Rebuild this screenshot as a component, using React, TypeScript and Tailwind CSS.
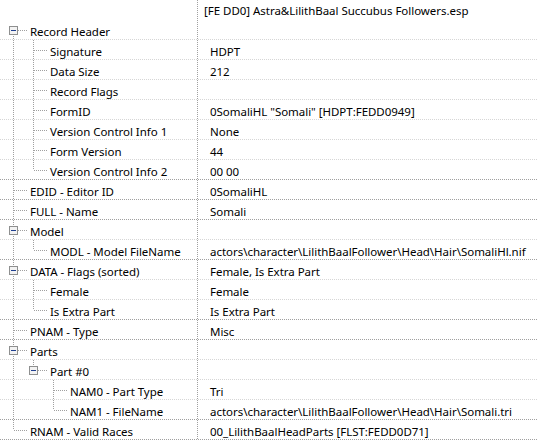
type Row = { label: string; value: string; level: number; open?: boolean };

const rows: Row[] = [
  { label: "Record Header", value: "", level: 0, open: true },
  { label: "Signature", value: "HDPT", level: 1 },
  { label: "Data Size", value: "212", level: 1 },
  { label: "Record Flags", value: "", level: 1 },
  { label: "FormID", value: '0SomaliHL "Somali" [HDPT:FEDD0949]', level: 1 },
  { label: "Version Control Info 1", value: "None", level: 1 },
  { label: "Form Version", value: "44", level: 1 },
  { label: "Version Control Info 2", value: "00 00", level: 1 },
  { label: "EDID - Editor ID", value: "0SomaliHL", level: 0 },
  { label: "FULL - Name", value: "Somali", level: 0 },
  { label: "Model", value: "", level: 0, open: true },
  { label: "MODL - Model FileName", value: "actors\\character\\LilithBaalFollower\\Head\\Hair\\SomaliHl.nif", level: 1 },
  { label: "DATA - Flags (sorted)", value: "Female, Is Extra Part", level: 0, open: true },
  { label: "Female", value: "Female", level: 1 },
  { label: "Is Extra Part", value: "Is Extra Part", level: 1 },
  { label: "PNAM - Type", value: "Misc", level: 0 },
  { label: "Parts", value: "", level: 0, open: true },
  { label: "Part #0", value: "", level: 1, open: true },
  { label: "NAM0 - Part Type", value: "Tri", level: 2 },
  { label: "NAM1 - FileName", value: "actors\\character\\LilithBaalFollower\\Head\\Hair\\Somali.tri", level: 2 },
  { label: "RNAM - Valid Races", value: "00_LilithBaalHeadParts [FLST:FEDD0D71]", level: 0 },
];

// does a later row sit at `level` before the branch closes?
function continues(i: number, level: number) {
  for (let j = i + 1; j < rows.length; j++) {
    if (rows[j].level < level) return false;
    if (rows[j].level === level) return true;
  }
  return false;
}

// 1px on / 1px off dotted guides
const vDots =
  "absolute w-px bg-[repeating-linear-gradient(to_bottom,#a0a0a0_0_1px,transparent_1px_2px)]";
const hDots =
  "absolute h-px bg-[repeating-linear-gradient(to_right,#a0a0a0_0_1px,transparent_1px_2px)]";
const sepStrong =
  "h-px bg-[repeating-linear-gradient(to_right,#a0a0a0_0_1px,transparent_1px_2px)]";
const sepLight =
  "h-px bg-[repeating-linear-gradient(to_right,#d6d6d6_0_1px,transparent_1px_2px)]";
const colSep =
  "w-px shrink-0 bg-[repeating-linear-gradient(to_bottom,#a0a0a0_0_1px,transparent_1px_2px)]";

function TreeRow({ row, i }: { row: Row; i: number }) {
  const next = rows[i + 1];
  const strong = !next || next.level === 0;
  const guides = Array.from({ length: row.level }, (_, k) => continues(i, k));
  return (
    <div className="flex flex-col">
      <div className="flex h-[19px]">
        <div className="flex w-[197px] shrink-0 pl-[3px]">
          {guides.map((g, k) => (
            <div key={k} className="relative w-5 shrink-0">
              {g && <span className={`${vDots} left-[10px] top-0 -bottom-px`} />}
            </div>
          ))}
          <div className="relative w-[25px] shrink-0">
            {i > 0 && <span className={`${vDots} left-[10px] top-0 h-[10px]`} />}
            {continues(i, row.level) && (
              <span className={`${vDots} left-[10px] top-[10px] -bottom-px`} />
            )}
            <span className={`${hDots} left-[11px] top-[10px] w-[14px]`} />
            {row.open && (
              <span className="absolute left-[6px] top-[6px] w-[9px] h-[9px] border border-[#8e8f8f] bg-[#f3f3f3] flex items-center justify-center">
                <span className="w-[5px] h-px bg-[#1f3f8f]" />
              </span>
            )}
          </div>
          <span className="ml-[2px] leading-[23px] whitespace-nowrap">{row.label}</span>
        </div>
        <div className={colSep} />
        <div className="pl-3 leading-[23px] whitespace-nowrap">{row.value}</div>
      </div>
      <div className={strong ? sepStrong : sepLight} />
    </div>
  );
}

export default function App() {
  return (
    <div className="w-[537px] h-[442px] overflow-hidden bg-white text-black text-[11.5px] tracking-[-0.03px] font-['Noto_Sans',sans-serif]">
      <div className="flex h-5">
        <div className="w-[197px] shrink-0" />
        <div className={colSep} />
        <div className="pl-1.5 leading-[22px] whitespace-nowrap">[FE DD0] Astra&amp;LilithBaal Succubus Followers.esp</div>
      </div>
      {rows.map((row, i) => (
        <TreeRow key={i} row={row} i={i} />
      ))}
    </div>
  );
}
